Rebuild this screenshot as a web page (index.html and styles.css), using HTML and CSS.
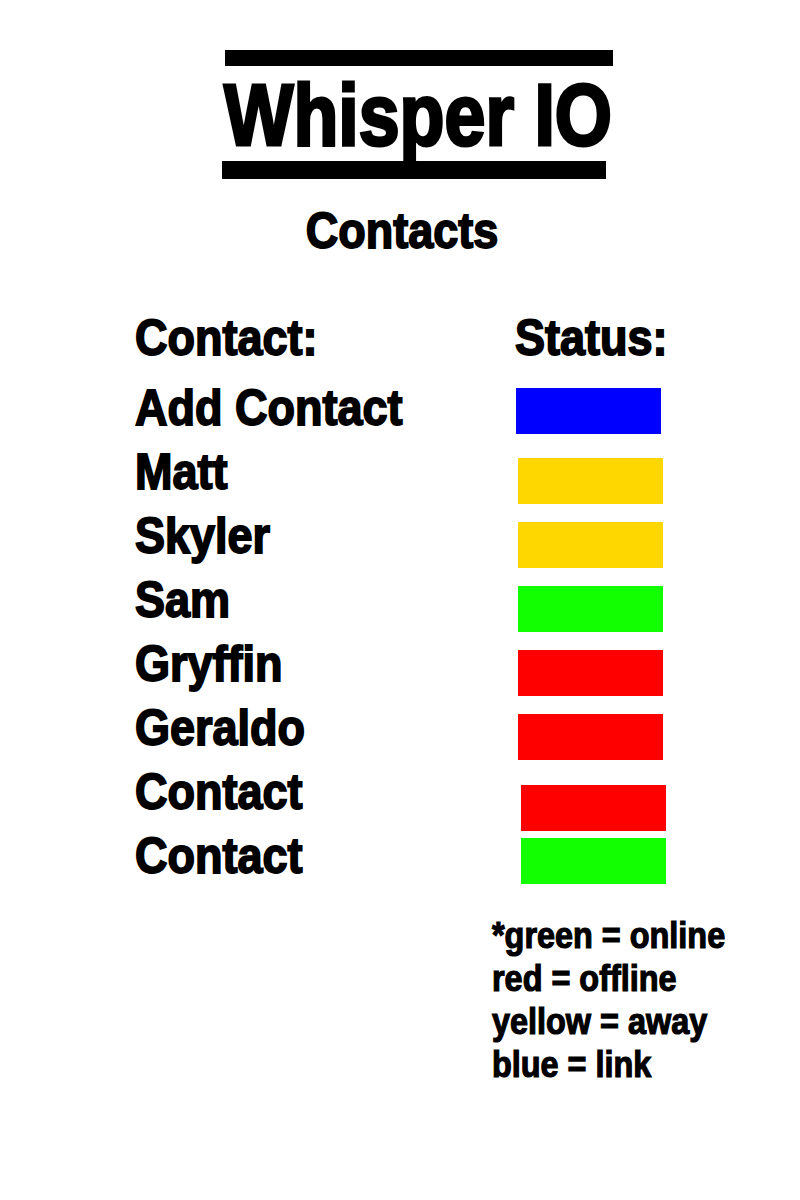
FILE: index.html
```html
<!DOCTYPE html>
<html lang="en">
<head>
<meta charset="utf-8">
<title>Whisper IO - Contacts</title>
<link rel="stylesheet" href="styles.css">
</head>
<body>
<main class="page">
  <header class="brand">
    <div class="bar bar-top"></div>
    <h1 class="brand-title"><span class="cond">Whisper IO</span></h1>
    <div class="bar bar-bottom"></div>
  </header>
  <h2 class="section-title"><span class="cond">Contacts</span></h2>
  <section class="contacts">
    <div class="col-head"><span class="cond">Contact:</span></div>
    <div class="col-head"><span class="cond">Status:</span></div>

    <div class="name"><span class="cond">Add Contact</span></div>
    <div class="status"><span class="swatch blue up"></span></div>

    <div class="name"><span class="cond">Matt</span></div>
    <div class="status"><span class="swatch yellow"></span></div>

    <div class="name"><span class="cond">Skyler</span></div>
    <div class="status"><span class="swatch yellow"></span></div>

    <div class="name"><span class="cond">Sam</span></div>
    <div class="status"><span class="swatch green"></span></div>

    <div class="name"><span class="cond">Gryffin</span></div>
    <div class="status"><span class="swatch red"></span></div>

    <div class="name"><span class="cond">Geraldo</span></div>
    <div class="status"><span class="swatch red"></span></div>

    <div class="name"><span class="cond">Contact</span></div>
    <div class="status"><span class="swatch red down"></span></div>

    <div class="name"><span class="cond">Contact</span></div>
    <div class="status"><span class="swatch green tight"></span></div>
  </section>
  <ul class="legend">
    <li><span class="cond">*green = online</span></li>
    <li><span class="cond">red = offline</span></li>
    <li><span class="cond">yellow = away</span></li>
    <li><span class="cond">blue = link</span></li>
  </ul>
</main>
</body>
</html>
```

FILE: styles.css
```css
html, body {
  margin: 0;
  padding: 0;
  background: #ffffff;
}

body {
  font-family: "Liberation Sans", Arial, sans-serif;
  font-weight: 700;
  color: #000000;
}

.page {
  width: 800px;
  height: 1200px;
  padding-top: 50px;
  box-sizing: border-box;
  overflow: hidden;
}

/* condensed, heavy display face */
.cond {
  display: inline-block;
  white-space: nowrap;
  transform: scaleX(0.9);
  transform-origin: left center;
  -webkit-text-stroke: 1.8px #000;
}

.brand {
  display: flex;
  flex-direction: column;
  width: 392px;
  margin-left: 222px;
}

.bar {
  background: #000000;
}

.bar-top {
  height: 16px;
  width: 388px;
  margin-left: 3px;
}

.bar-bottom {
  height: 18px;
  width: 384px;
  margin-top: 3px;
}

.brand-title {
  margin: 5px 0 0 0;
  font-size: 87px;
  line-height: 87px;
  font-weight: 700;
  white-space: nowrap;
}

.brand-title .cond {
  transform: scaleX(0.845);
  -webkit-text-stroke: 3.2px #000;
  margin-left: 2px;
}

.section-title {
  margin: 27px 0 0 0;
  font-size: 50px;
  line-height: 50px;
  text-align: center;
}

.section-title .cond {
  transform-origin: center center;
  margin-left: 4px;
}

.contacts {
  display: grid;
  grid-template-columns: 380px 160px;
  grid-template-rows: 70px;
  grid-auto-rows: 64px;
  padding-left: 135px;
  margin-top: 50px;
}

.col-head,
.name {
  font-size: 50px;
  line-height: 64px;
  white-space: nowrap;
}

.status {
  padding-top: 18px;
}

.swatch {
  display: block;
  width: 145px;
  height: 46px;
  margin-left: 3px;
}

.swatch.up {
  margin-top: -6px;
  margin-left: 1px;
}

.swatch.down {
  margin-top: 7px;
  margin-left: 6px;
}

.swatch.tight {
  margin-top: -4px;
  margin-left: 6px;
}

.blue { background: #0000ff; }
.yellow { background: #ffd700; }
.green { background: #11ff00; }
.red { background: #ff0000; }

.legend {
  list-style: none;
  margin: 26px 0 0 492px;
  padding: 0;
  font-size: 36px;
  line-height: 43px;
}

.legend .cond {
  transform: scaleX(0.9);
  -webkit-text-stroke: 1.2px #000;
}
```
